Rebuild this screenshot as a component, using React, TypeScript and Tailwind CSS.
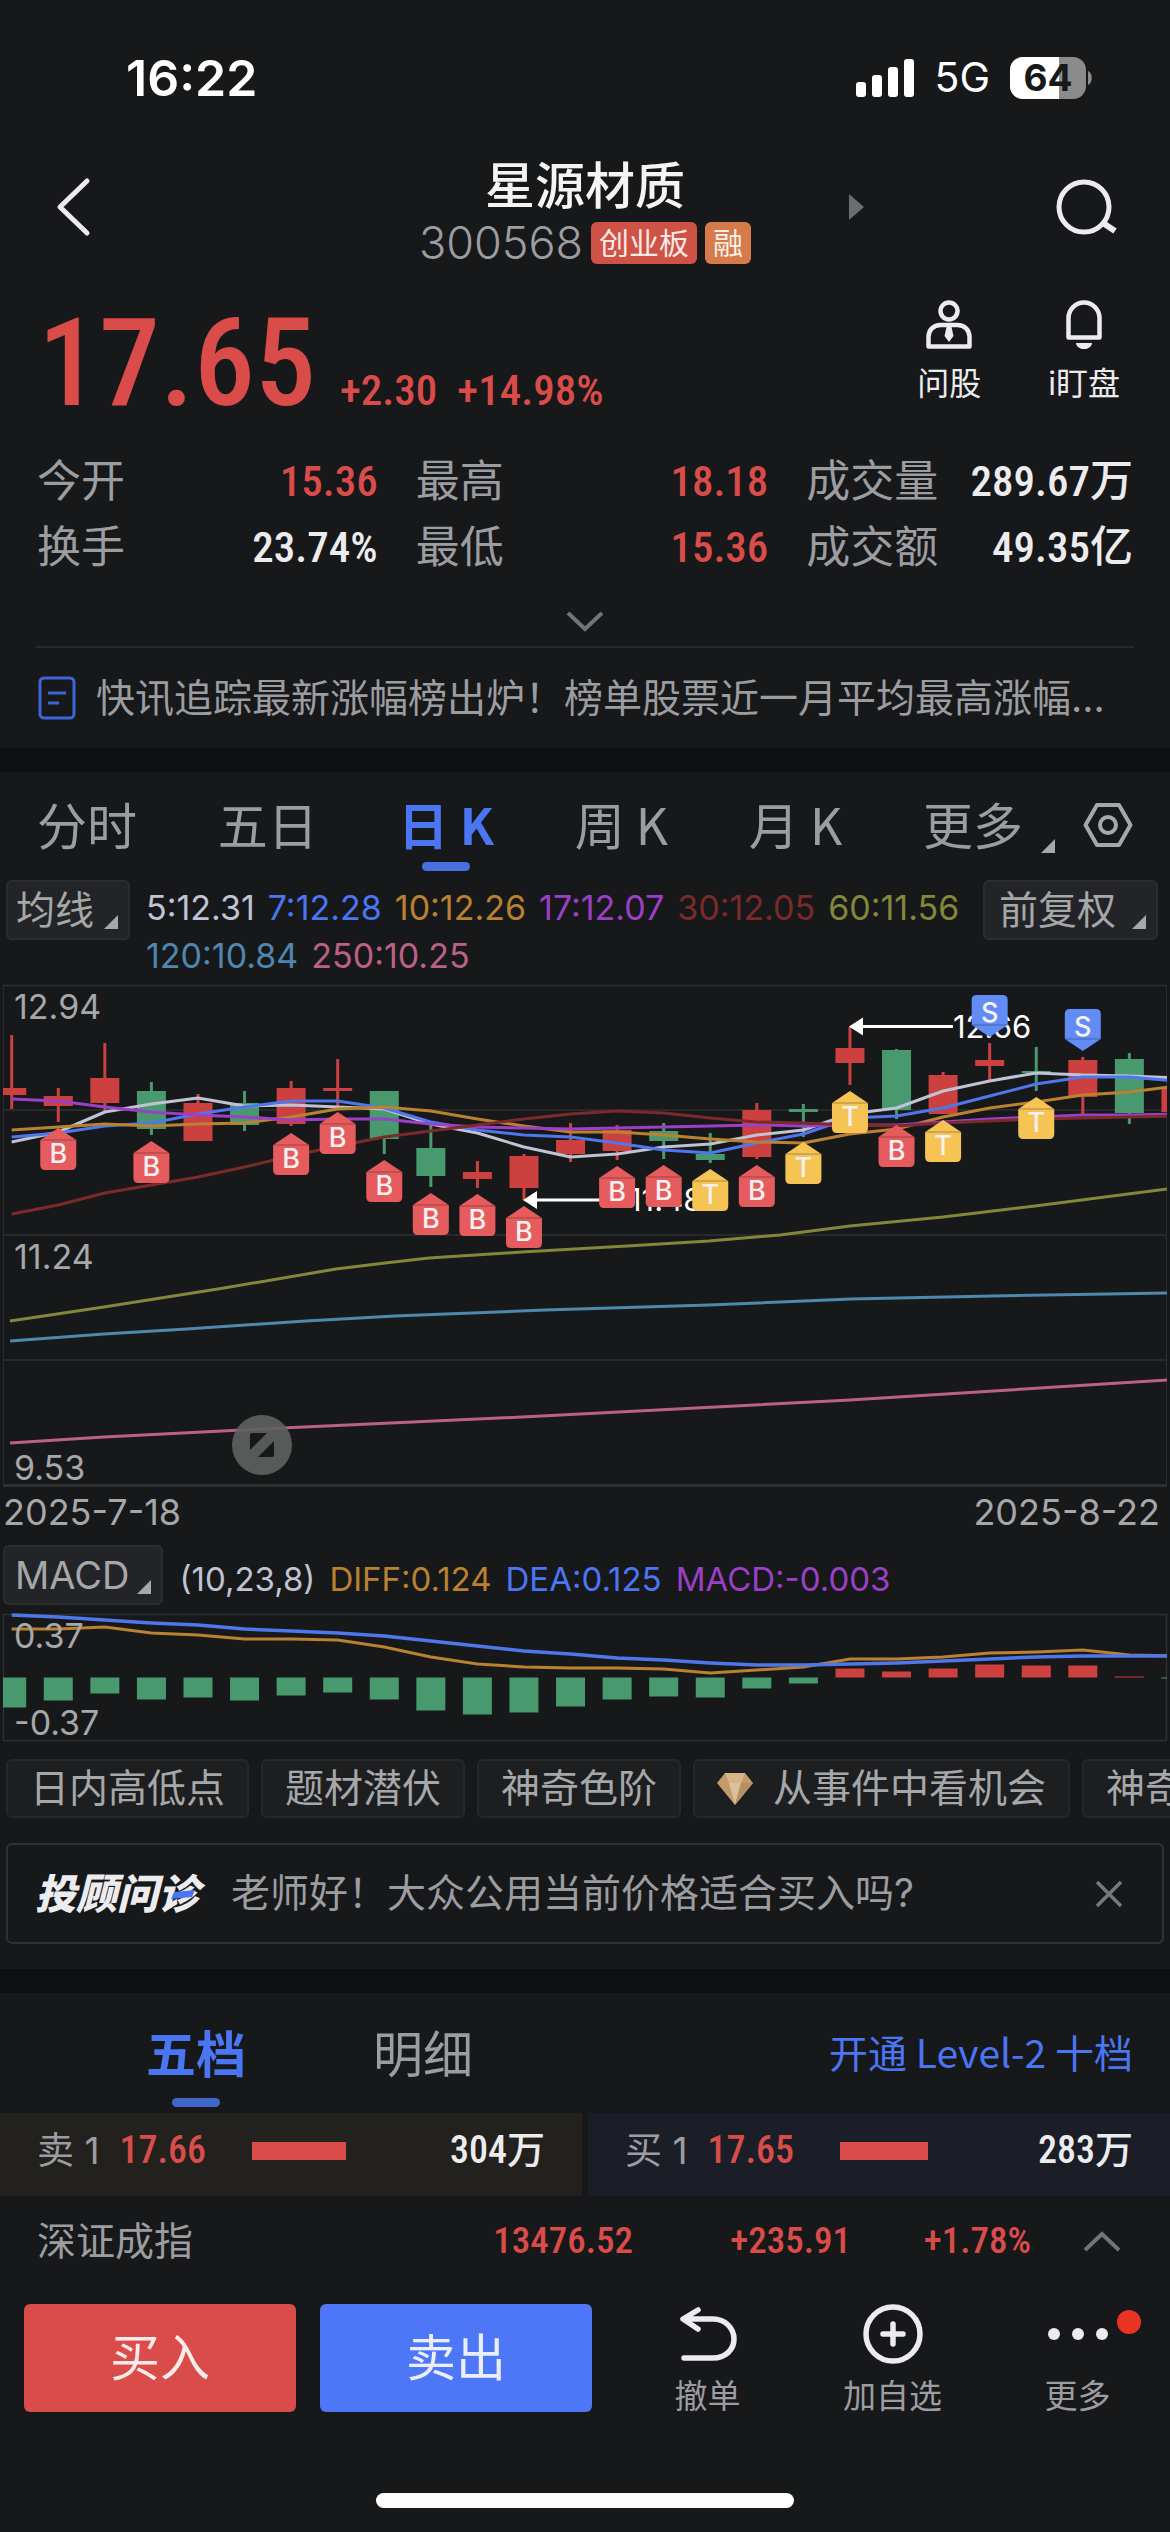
import React, { useState } from 'react';
import clsx from 'clsx';

type Candle = [high: number, top: number, bottom: number, low: number, dir: 'up' | 'down'];
type MarkerKind = 'B' | 'T' | 'S';

const RED = '#cc413f';
const GREEN = '#489a6e';
const STEP = 46.57;
const xAt = (i: number) => 11.7 + STEP * i;

const candles: Candle[] = [
  [55, 108, 115, 129, 'up'],
  [108, 116, 126, 142, 'up'],
  [63, 98, 123, 131, 'up'],
  [102, 111, 149, 155, 'down'],
  [114, 123, 161, 161, 'up'],
  [111, 123, 145, 151, 'down'],
  [101, 108, 144, 146, 'up'],
  [79, 108, 111, 127, 'up'],
  [111, 111, 159, 174, 'down'],
  [144, 168, 196, 207, 'down'],
  [181, 192, 199, 208, 'up'],
  [174, 176, 208, 220, 'up'],
  [143, 160, 174, 182, 'up'],
  [145, 150, 171, 180, 'up'],
  [143, 151, 161, 179, 'down'],
  [153, 174, 180, 183, 'down'],
  [123, 130, 177, 179, 'up'],
  [124, 129, 132, 157, 'down'],
  [47, 68, 83, 105, 'up'],
  [69, 70, 130, 139, 'down'],
  [92, 95, 134, 134, 'up'],
  [63, 80, 86, 100, 'up'],
  [67, 91, 93, 111, 'down'],
  [77, 80, 117, 135, 'up'],
  [73, 79, 133, 144, 'down'],
  [107, 107, 132, 132, 'up'],
];

const maLines = [
  { color: '#bfc3d3', ys: [162, 152, 132, 124, 118, 126, 125, 127, 129, 144, 153, 167, 177, 174, 167, 164, 155, 150, 134, 128, 111, 101, 93, 95, 96, 98] },
  { color: '#4f76ea', ys: [157, 153, 146, 143, 134, 127, 121, 121, 128, 142, 150, 155, 157, 163, 170, 173, 163, 154, 138, 136, 128, 116, 104, 97, 97, 101] },
  { color: '#b98130', ys: [150, 147, 144, 146, 144, 143, 137, 129, 127, 131, 139, 146, 152, 152, 155, 159, 162, 163, 154, 149, 137, 128, 122, 115, 112, 106] },
  { color: '#9b40c6', ys: [119, 121, 127, 132, 135, 137, 140, 139, 139, 144, 147, 148, 149, 148, 147, 146, 145, 146, 145, 145, 142, 139, 137, 135, 135, 134] },
  { color: '#7b2a2a', ys: [234, 225, 213, 205, 197, 187, 176, 166, 157, 151, 145, 139, 134, 131, 133, 138, 142, 143, 145, 146, 143, 141, 139, 138, 137, 136] },
];

const longLines = [
  { color: '#84873a', points: '10,341 104,327 224,308 336,289 385,283 429,278 522,272 627,266 709,261 780,255 850,246 943,237 1035,226 1167,209' },
  { color: '#4f87ae', points: '10,361 104,354 187,349 306,341 395,336 545,330 709,325 851,319 992,316 1167,313' },
  { color: '#bb6187', points: '10,463 104,457 261,449 522,437 850,420 1167,400' },
];

const markers: { i: number; kind: MarkerKind; y: number }[] = [
  { i: 1, kind: 'B', y: 148 },
  { i: 3, kind: 'B', y: 161 },
  { i: 6, kind: 'B', y: 153 },
  { i: 7, kind: 'B', y: 132 },
  { i: 8, kind: 'B', y: 180 },
  { i: 9, kind: 'B', y: 213 },
  { i: 10, kind: 'B', y: 214 },
  { i: 11, kind: 'B', y: 226 },
  { i: 13, kind: 'B', y: 186 },
  { i: 14, kind: 'B', y: 185 },
  { i: 15, kind: 'T', y: 189 },
  { i: 16, kind: 'B', y: 185 },
  { i: 17, kind: 'T', y: 162 },
  { i: 18, kind: 'T', y: 111 },
  { i: 19, kind: 'B', y: 145 },
  { i: 20, kind: 'T', y: 140 },
  { i: 21, kind: 'S', y: 15 },
  { i: 22, kind: 'T', y: 117 },
  { i: 23, kind: 'S', y: 29 },
];

const markerColor: Record<MarkerKind, string> = { B: '#e65c5e', T: '#f6c455', S: '#618cf6' };

const macdBars = [-30, -23, -16, -22, -20, -23, -18, -15, -22, -33, -37, -35, -29, -22, -19, -20, -11, -6, 9, 6, 9, 13, 12, 12, 1, -1];
const diffLine = [19, 19, 17, 23, 25, 29, 29, 30, 37, 47, 54, 57, 58, 58, 59, 63, 60, 57, 49, 49, 47, 43, 42, 40, 45, 46];
const deaLine = [5, 7, 10, 13, 15, 19, 21, 23, 26, 31, 36, 41, 44, 48, 50, 53, 55, 55, 54, 53, 51, 49, 47, 46, 46, 46];

const toPoints = (ys: number[]) => ys.map((y, i) => `${xAt(i)},${y}`).join(' ');

const StatusBar = () => (
  <div className="mt-[42px] flex h-[72px] items-center justify-between pr-[78px] pl-[126px] text-white">
    <span className="text-[50px] font-semibold">16:22</span>
    <div className="flex items-center">
      <svg width="58" height="38" viewBox="0 0 58 38" fill="#fff">
        <rect x="0" y="23" width="10" height="15" rx="3" />
        <rect x="16" y="16" width="10" height="22" rx="3" />
        <rect x="32" y="8" width="10" height="30" rx="3" />
        <rect x="48" y="0" width="10" height="38" rx="3" />
      </svg>
      <span className="ml-5 text-[41px]">5G</span>
      <svg className="ml-5 overflow-visible" width="82" height="42" viewBox="0 0 82 42">
        <defs>
          <clipPath id="battery">
            <rect width="76" height="42" rx="13" />
          </clipPath>
        </defs>
        <g clipPath="url(#battery)">
          <rect width="76" height="42" fill="#8b8b8c" />
          <rect width="49" height="42" fill="#fff" />
        </g>
        <path d="M78 14c5 2 5 12 0 14z" fill="#8b8b8c" />
        <text x="38" y="34" textAnchor="middle" className="text-[37px] font-bold" fill="#17181a">64</text>
      </svg>
    </div>
  </div>
);

const StockHeader = () => (
  <header className="mt-[46px] grid grid-cols-[1fr_auto_1fr] items-center">
    <button aria-label="返回" className="ml-[54px] w-10 pb-[10px]">
      <svg width="38" height="60" viewBox="0 0 38 60" fill="none" stroke="#ececee" strokeWidth="5" strokeLinecap="round" strokeLinejoin="round">
        <path d="M33 4L6 30l27 26" />
      </svg>
    </button>
    <div className="flex flex-col items-center">
      <h1 className="text-[50px] leading-[52px] font-medium text-[#f4f4f5]">星源材质</h1>
      <div className="mt-[10px] flex h-[42px] items-center text-[30px]">
        <span className="text-[45px] font-light text-[#9c9da0]">300568</span>
        <span className="ml-2 rounded-md bg-[#cf5246] px-2 leading-[42px] text-[#fbe9e6]">创业板</span>
        <span className="ml-2 rounded-md bg-[#d67a4b] px-2 leading-[42px] text-[#fbefe6]">融</span>
      </div>
    </div>
    <div className="flex items-center justify-between pr-[52px] pb-[10px] pl-[98px]">
      <button aria-label="下一只">
        <svg width="15" height="26" viewBox="0 0 15 26" fill="#6c6d6f">
          <path d="M0 0l15 13L0 26z" />
        </svg>
      </button>
      <button aria-label="搜索">
        <svg width="62" height="56" viewBox="0 0 62 56" fill="none" stroke="#ececee" strokeWidth="5">
          <circle cx="28" cy="28" r="25" />
          <path d="M47 44l12 8" strokeWidth="6" />
        </svg>
      </button>
    </div>
  </header>
);

const num = "font-['Roboto_Condensed','Noto_Sans_CJK_SC',sans-serif] font-medium";

const PriceRow = () => (
  <div className="mt-[36px] flex h-[120px] items-start justify-between pr-[50px] pl-[38px]">
    <div className={clsx(num, 'flex items-baseline pt-1 text-[#d94c4a]')}>
      <span className="text-[122px] leading-[120px]">17.65</span>
      <span className="ml-6 text-[43px] leading-[50px]">+2.30</span>
      <span className="ml-5 text-[43px] leading-[50px]">+14.98%</span>
    </div>
    <div className="flex gap-[67px] text-[32px] leading-[36px] text-[#ececee]">
      <button className="flex flex-col items-center gap-4">
        <svg width="46" height="50" viewBox="0 0 46 50" fill="none" stroke="#ececee" strokeWidth="4.5">
          <circle cx="23" cy="11" r="8.5" />
          <path d="M2.5 46.5V37c0-7 5-12 12-12h17c7 0 12 5 12 12v9.5z" strokeLinejoin="round" />
          <path d="M20.5 27h5l2 9-4.5 6-4.5-6z" fill="#ececee" stroke="none" />
        </svg>
        问股
      </button>
      <button className="flex flex-col items-center gap-4">
        <svg width="38" height="50" viewBox="0 0 38 50" fill="none" stroke="#ececee" strokeWidth="4.5">
          <path d="M3.5 37.5V18a15.5 15.5 0 0 1 31 0v19.5z" strokeLinejoin="round" />
          <path d="M11 43h16c-1 8-15 8-16 0z" fill="#ececee" stroke="none" />
        </svg>
        <span>i盯盘</span>
      </button>
    </div>
  </div>
);

const stats = [
  { label: '今开', value: '15.36', red: true },
  { label: '最高', value: '18.18', red: true },
  { label: '成交量', value: '289.67万', red: false },
  { label: '换手', value: '23.74%', red: false },
  { label: '最低', value: '15.36', red: true },
  { label: '成交额', value: '49.35亿', red: false },
];

const StatsGrid = () => (
  <dl className="mt-[28px] grid grid-cols-[340fr_352fr_326fr] gap-x-[38px] px-[37px] text-[44px] leading-[66px]">
    {stats.map((s) => (
      <div key={s.label} className="flex h-[66px] justify-between">
        <dt className="text-[#9c9da0]">{s.label}</dt>
        <dd className={clsx(num, 'text-[43px]', s.red ? 'text-[#d94c4a]' : 'text-[#ececee]')}>{s.value}</dd>
      </div>
    ))}
  </dl>
);

const News = () => (
  <>
    <div className="mx-[36px] flex h-[68px] justify-center border-b-2 border-[#28292b] pt-[30px]">
      <button aria-label="展开" className="h-6">
        <svg width="36" height="22" viewBox="0 0 36 22" fill="none" stroke="#737476" strokeWidth="4">
          <path d="M1 2l17 16L35 2" />
        </svg>
      </button>
    </div>
    <a href="#news" className="flex h-[100px] items-center gap-[20px] px-[38px] text-[39px] text-[#9c9da0]">
      <svg className="shrink-0" width="38" height="44" viewBox="0 0 38 44" fill="none" stroke="#3c66d8" strokeWidth="3">
        <rect x="2" y="2" width="34" height="40" rx="4" />
        <path d="M10 17h18M10 27h11" />
      </svg>
      <span className="truncate">快讯追踪最新涨幅榜出炉！榜单股票近一月平均最高涨幅…</span>
    </a>
  </>
);

const Corner = () => (
  <svg className="shrink-0" width="14" height="14" viewBox="0 0 14 14" fill="#a6a7a9">
    <path d="M14 0v14H0z" />
  </svg>
);

const periods = ['分时', '五日', '日 K', '周 K', '月 K'];

const PeriodTabs = () => {
  const [active, setActive] = useState('日 K');
  return (
    <nav className="flex h-[106px] items-center gap-[28px] px-[37px] font-['Noto_Sans_CJK_SC',sans-serif] text-[50px] text-[#9c9da0]">
      <div className="flex h-full flex-1 items-center justify-between">
        {periods.map((p) => (
          <button
            key={p}
            onClick={() => setActive(p)}
            className={clsx('relative h-full pb-1', active === p && 'font-bold text-[#4a76f4]')}
          >
            {p}
            {active === p && <span className="absolute bottom-[7px] left-1/2 h-[9px] w-12 -translate-x-1/2 rounded-full bg-[#4570de]" />}
          </button>
        ))}
        <button className="flex items-end gap-[18px] pb-1 leading-[60px]">
          更多
          <Corner />
        </button>
      </div>
      <button aria-label="设置">
        <svg width="50" height="46" viewBox="0 0 50 46" fill="none" stroke="#a6a7a9" strokeWidth="4">
          <path d="M14 3h22l11.5 20L36 43H14L2.5 23z" strokeLinejoin="round" />
          <circle cx="25" cy="23" r="8" />
        </svg>
      </button>
    </nav>
  );
};

const maLegend = [
  { text: '5:12.31', cls: 'text-[#bfc3d3]' },
  { text: '7:12.28', cls: 'text-[#4a76f4]' },
  { text: '10:12.26', cls: 'text-[#b98130]' },
  { text: '17:12.07', cls: 'text-[#9b40c6]' },
  { text: '30:12.05', cls: 'text-[#7b2a2a]' },
  { text: '60:11.56', cls: 'text-[#84873a]' },
  { text: '120:10.84', cls: 'text-[#4f87ae]' },
  { text: '250:10.25', cls: 'text-[#bb6187]' },
];

const pick = 'flex h-[60px] shrink-0 items-center rounded-md border-2 border-[#2c2d30] bg-[#232427] text-[39px] text-[#a6a7a9]';

const MaRow = () => (
  <div className="mt-[2px] flex items-start pr-3 pl-[6px]">
    <button className={clsx(pick, 'gap-[10px] pr-[10px] pl-2')}>
      均线
      <span className="pt-6"><Corner /></span>
    </button>
    <div className="flex flex-1 flex-wrap gap-x-[13px] pt-1 pl-4 text-[34px] leading-[48px]">
      {maLegend.map((m) => (
        <span key={m.text} className={m.cls}>{m.text}</span>
      ))}
    </div>
    <button className={clsx(pick, 'gap-[16px] pr-[10px] pl-[14px]')}>
      前复权
      <span className="pt-6"><Corner /></span>
    </button>
  </div>
);

const Marker = ({ i, kind, y }: { i: number; kind: MarkerKind; y: number }) => {
  const x = xAt(i);
  const down = kind === 'S';
  return (
    <g transform={`translate(${x} ${y})`}>
      <path
        d={down ? 'M-13 0h26q5 0 5 5v25L0 42l-18-12V5q0-5 5-5z' : 'M0 0l18 12v25q0 5-5 5h-26q-5 0-5-5V12z'}
        fill={markerColor[kind]}
      />
      <path d={down ? 'M-18 30h36' : 'M-18 12h36'} stroke="#000" strokeOpacity="0.3" />
      <text y={down ? 27 : 35} textAnchor="middle" className="text-[27px] font-medium" fill="#f6f1f1">{kind}</text>
    </g>
  );
};

const KChart = () => (
  <div className="relative">
    <svg className="block w-full" viewBox="0 0 1170 510" fill="none">
      <defs>
        <clipPath id="plot">
          <rect x="3" y="0" width="1164" height="510" />
        </clipPath>
      </defs>
      <path d="M3 5.5H1167M3 130H1167M3 255H1167M3 380H1167" stroke="#2e2f31" strokeWidth="1.5" />
      <path d="M3.5 5V505M1166.5 5V505" stroke="#2a2b2d" />
      <path d="M3 505.5H1167" stroke="#2e2f31" strokeWidth="3" />
      <g clipPath="url(#plot)">
        {candles.map(([high, top, bottom, low, dir], i) => (
          <g key={i} fill={dir === 'up' ? RED : GREEN}>
            <rect x={xAt(i) - 1.5} y={high} width="3" height={low - high} />
            <rect x={xAt(i) - 14.5} y={top} width="29" height={bottom - top} />
          </g>
        ))}
        {maLines.map((l) => (
          <polyline key={l.color} points={toPoints(l.ys)} stroke={l.color} strokeWidth="3" strokeLinejoin="round" />
        ))}
        {longLines.map((l) => (
          <polyline key={l.color} points={l.points} stroke={l.color} strokeWidth="3" strokeLinejoin="round" />
        ))}
      </g>
      <g className="text-[34px]" fill="#a6a7a9">
        <text x="14" y="39">12.94</text>
        <text x="14" y="289">11.24</text>
        <text x="14" y="500">9.53</text>
      </g>
      <g className="text-[31px]" fill="#fff">
        <path d="M849 46.5l14-9v18z" />
        <path d="M862 46.5h91" stroke="#fff" strokeWidth="3" />
        <text x="953" y="58">12.66</text>
        <path d="M523 220l14-9v18z" />
        <path d="M536 220h92" stroke="#fff" strokeWidth="3" />
        <text x="629" y="231">11.48</text>
      </g>
      {markers.map((m) => (
        <Marker key={m.i} {...m} />
      ))}
    </svg>
    <button aria-label="全屏" className="absolute bottom-[15px] left-[232px] size-[60px] rounded-full bg-[#5f6061]/90">
      <svg width="60" height="60" viewBox="0 0 60 60" fill="#17181a">
        <path d="M20 18h15L18 35V20q0-2 2-2zM42 26v14q0 2-2 2H26z" />
      </svg>
    </button>
  </div>
);

const Macd = () => (
  <>
    <div className="mt-[11px] flex items-center pl-[3px]">
      <button className={clsx(pick, 'gap-[8px] pr-[10px] pl-[10px]')}>
        <span className="text-[38px]">MACD</span>
        <span className="pt-6"><Corner /></span>
      </button>
      <div className="flex gap-x-[14px] pt-2 pl-4 text-[33px] leading-[48px]">
        <span className="text-[#bfc3d3]">(10,23,8)</span>
        <span className="text-[#b98130]">DIFF:0.124</span>
        <span className="text-[#4a76f4]">DEA:0.125</span>
        <span className="text-[#9b40c6]">MACD:-0.003</span>
      </div>
    </div>
    <svg className="mt-[5px] block w-full" viewBox="0 0 1170 134" fill="none">
      <path d="M3.5 4.5H1166.5V130.5H3.5z" stroke="#2e2f31" strokeWidth="1.5" />
      <g clipPath="url(#plot)">
        {macdBars.map((v, i) => (
          <rect
            key={i}
            x={xAt(i) - 14.5}
            y={v > 0 ? 67.5 - v : 67.5}
            width="29"
            height={Math.abs(v)}
            fill={v > 0 ? RED : GREEN}
          />
        ))}
        <polyline points={toPoints(diffLine)} stroke="#b98130" strokeWidth="3" />
        <polyline points={toPoints(deaLine)} stroke="#4f76ea" strokeWidth="3.5" />
      </g>
      <g className="text-[34px]" fill="#a6a7a9">
        <text x="14" y="38">0.37</text>
        <text x="14" y="125">-0.37</text>
      </g>
    </svg>
  </>
);

const chip = 'flex h-[59px] shrink-0 items-center rounded-md border-2 border-[#26272a] bg-[#1d1e20] px-[22px] whitespace-nowrap';

const Chips = () => (
  <div className="mt-[15px] flex gap-3 overflow-hidden pl-[6px] text-[39px] text-[#a6a7a9]">
    <button className={chip}>日内高低点</button>
    <button className={chip}>题材潜伏</button>
    <button className={chip}>神奇色阶</button>
    <button className={clsx(chip, 'gap-[20px]')}>
      <svg width="36" height="32" viewBox="0 0 36 32">
        <path d="M8 0h20l8 10-18 22L0 10z" fill="#c39a6b" />
        <path d="M8 0h20l-4 10H12z" fill="#d9b48a" />
        <path d="M12 10h12l-6 22z" fill="#dcc09c" />
        <path d="M24 10h12L18 32z" fill="#b98f62" />
      </svg>
      从事件中看机会
    </button>
    <button className={chip}>神奇电波</button>
  </div>
);

const AskBanner = () => (
  <div className="mx-[6px] mt-[25px] mb-[25px] flex h-[101px] items-center rounded-md border-2 border-[#303133] pr-[39px] pl-[27px] text-[39px] text-[#9c9da0]">
    <span className="relative text-[41px] leading-[60px] font-black text-[#ececee] italic">
      投顾问诊
      <svg className="absolute top-[26px] right-1" width="24" height="9" viewBox="0 0 24 9">
        <path d="M3 2l21-2-3 7-21 2z" fill="#4a76f4" />
      </svg>
    </span>
    <a href="#ask" className="ml-8 flex-1">老师好！大众公用当前价格适合买入吗?</a>
    <button aria-label="关闭">
      <svg width="28" height="28" viewBox="0 0 28 28" stroke="#77787a" strokeWidth="3.5">
        <path d="M2 2l24 24M26 2L2 26" />
      </svg>
    </button>
  </div>
);

const OrderTabs = () => {
  const [tab, setTab] = useState('五档');
  return (
    <div className="flex h-[120px] items-center pr-[37px] pl-[146px] font-['Noto_Sans_CJK_SC',sans-serif]">
      <div className="flex h-full gap-[127px] text-[50px] text-[#9c9da0]">
        {['五档', '明细'].map((t) => (
          <button key={t} onClick={() => setTab(t)} className={clsx('relative h-full pb-1', tab === t && 'font-bold text-[#4a76f4]')}>
            {t}
            {tab === t && <span className="absolute bottom-[6px] left-1/2 h-[9px] w-12 -translate-x-1/2 rounded-full bg-[#4166c9]" />}
          </button>
        ))}
      </div>
      <a href="#level2" className="ml-auto pb-1 text-[39px] text-[#4a76f4]">开通 Level-2 十档</a>
    </div>
  );
};

const orders = [
  { side: '卖 1', price: '17.66', qty: '304万', bar: 94, bg: 'bg-[#23211e]' },
  { side: '买 1', price: '17.65', qty: '283万', bar: 88, bg: 'bg-[#1c1e27]' },
];

const OrderBook = () => (
  <div className="grid grid-cols-2 gap-[6px]">
    {orders.map((o) => (
      <div key={o.side} className={clsx('flex h-[83px] items-center px-[37px] pb-2 text-[38px]', o.bg)}>
        <span className="text-[37px] text-[#9c9da0]">{o.side}</span>
        <span className={clsx(num, 'ml-5 text-[#d94c4a]')}>{o.price}</span>
        <span className="ml-[46px] h-[18px] bg-[#d94c4a]" style={{ width: o.bar }} />
        <span className={clsx(num, 'ml-auto text-[#ececee]')}>{o.qty}</span>
      </div>
    ))}
  </div>
);

const IndexRow = () => (
  <div className="flex h-[90px] items-center pr-[50px] pl-[37px] text-[37px] text-[#d94c4a]">
    <span className="flex-1 text-[39px] text-[#9c9da0]">深证成指</span>
    <span className={num}>13476.52</span>
    <span className={clsx(num, 'w-[218px] text-right')}>+235.91</span>
    <span className={clsx(num, 'w-[180px] text-right')}>+1.78%</span>
    <button aria-label="展开指数" className="ml-[53px]">
      <svg width="36" height="22" viewBox="0 0 36 22" fill="none" stroke="#737476" strokeWidth="4">
        <path d="M1 20L18 4l17 16" />
      </svg>
    </button>
  </div>
);

const action = 'flex flex-col items-center gap-[14px]';

const ActionBar = () => (
  <footer className="mt-[18px] flex pl-6">
    <button className="h-[108px] w-[272px] rounded-md bg-[#d94c4a] text-[50px] text-[#f8ebea]">买入</button>
    <button className="ml-6 h-[108px] w-[272px] rounded-md bg-[#4d77f6] text-[50px] text-[#ebeffc]">卖出</button>
    <div className="ml-[23px] grid flex-1 grid-cols-3 text-[33px] leading-[36px] text-[#9c9da0]">
      <button className={action}>
        <svg width="60" height="60" viewBox="0 0 60 60" fill="none" stroke="#ececee" strokeWidth="5.5" strokeLinecap="round" strokeLinejoin="round">
          <path d="M20 6L5 15l15 10M6 15h29c12 0 21 9 21 20s-9 19-21 19H6" />
        </svg>
        撤单
      </button>
      <button className={action}>
        <svg width="60" height="60" viewBox="0 0 60 60" fill="none" stroke="#ececee" strokeWidth="5.5" strokeLinecap="round">
          <circle cx="30" cy="30" r="27" />
          <path d="M30 20v20M20 30h20" />
        </svg>
        加自选
      </button>
      <button className={action}>
        <span className="relative">
          <svg width="60" height="60" viewBox="0 0 60 60" fill="#ececee">
            <circle cx="6" cy="30" r="6" />
            <circle cx="30" cy="30" r="6" />
            <circle cx="54" cy="30" r="6" />
          </svg>
          <span className="absolute top-[6px] -right-[33px] size-6 rounded-full bg-[#e93323]" />
        </span>
        更多
      </button>
    </div>
  </footer>
);

const Band = () => <div className="h-6 bg-[#0f1012]" />;

export default function App() {
  return (
    <div className="flow-root min-h-screen overflow-hidden bg-[#17181a] font-['Inter','Noto_Sans_CJK_SC',sans-serif]">
      <StatusBar />
      <StockHeader />
      <PriceRow />
      <StatsGrid />
      <News />
      <Band />
      <PeriodTabs />
      <MaRow />
      <KChart />
      <div className="flex h-[44px] items-center justify-between pr-[10px] pl-[3px] text-[36px] text-[#a6a7a9]">
        <span>2025-7-18</span>
        <span>2025-8-22</span>
      </div>
      <Macd />
      <Chips />
      <AskBanner />
      <Band />
      <OrderTabs />
      <OrderBook />
      <IndexRow />
      <ActionBar />
      <div className="mx-auto mt-[79px] mb-6 h-[15px] w-[418px] rounded-full bg-white" />
    </div>
  );
}
